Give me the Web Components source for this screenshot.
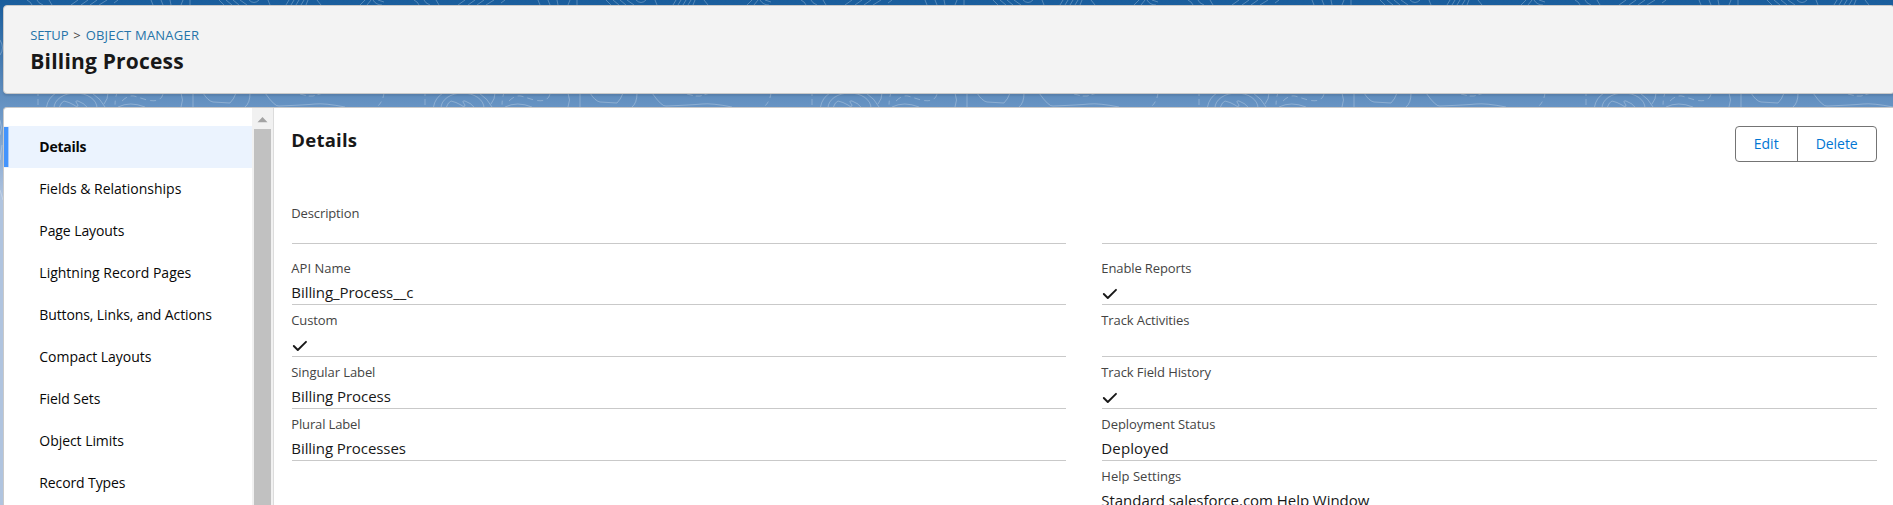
<!DOCTYPE html>
<html lang="en">
<head>
<meta charset="utf-8">
<title>Billing Process</title>
<style>
html,body{margin:0;height:100%;overflow:hidden}
body{font-family:"Open Sans","Noto Sans",sans-serif;color:#181818}
</style>
</head>
<body>
<setup-page>
  <page-header slot="header"></page-header>
  <side-nav slot="nav"></side-nav>
  <details-panel slot="main"></details-panel>
</setup-page>
<script>
const define = (name, html, setup) => {
  const t = document.createElement('template');
  t.innerHTML = html;
  customElements.define(name, class extends HTMLElement {
    connectedCallback() {
      if (this.shadowRoot) return;
      this.attachShadow({mode: 'open'}).append(t.content.cloneNode(true));
      if (setup) setup(this, this.shadowRoot);
    }
  });
};

/* A single line of text tracked to a given width. */
define('fit-text', `<style>:host{display:inline-block;white-space:nowrap;margin-left:-.7px}span{display:inline-block}</style><span><slot></slot></span>`,
  (el, root) => {
    const s = root.querySelector('span'), w = +el.getAttribute('w');
    requestAnimationFrame(() => {
      const n = el.textContent.length;
      s.style.letterSpacing = ((w - s.getBoundingClientRect().width) / n).toFixed(3) + 'px';
    });
  });

define('check-mark', `<style>:host{display:block;width:16px;height:12px}svg{display:block}</style>
<svg width="16" height="12" viewBox="0 0 16 12" fill="none" stroke="#181818" stroke-width="1.9" stroke-linecap="round" stroke-linejoin="round"><path d="M1.8 6 L5.8 10 L14 1.8"/></svg>`);

define('topo-backdrop', `<style>:host{display:block;height:505px;background:linear-gradient(#195d9c 0,#1b5f9e 5px,#608dbe 94px,#6894c4 108px,#b0c4df 200px)}svg{display:block}</style>
<svg width="1893" height="505" fill="none" stroke="#fff" stroke-width="1">
<defs><pattern id="p" width="387" height="210" patternUnits="userSpaceOnUse">
<g stroke-opacity=".26">
<path d="M38 93v3M38 99v6M46.5 107Q48 98 56 93M92 93Q101 99 105 107M108 93Q108 99 104 104"/>
<path d="M54 108a21.5 15 0 0 1 43 0M59 108q2-6 5-7q5 1 10 4q4 3 4 0q-4-5 0-4q6 2 10 7"/>
<path d="M117 93q-2 5-2 14" stroke-dasharray="4 4"/><path d="M122 101Q128 95 134 96L147 100Q161 103 163 94" stroke-dasharray="6 4"/>
<path d="M118 107Q130 101 145 107M181 93Q184 100 181 107M193 93V107M203 93Q208 101 213 102L230 103Q234 99 236 93M250 93Q250 103 245 107M265 93Q275 107 279 106Q305 105 315 104T345 107"/>
<path d="M300 94L308 96L313 96L323 93" stroke-dasharray="6 3"/><path d="M384 93q-1 8-6 13" stroke-dasharray="5 4"/>
<path d="M27 0Q31 2 32 5M37 0Q38 3 43 5M49 0L52 5M71 5L78 0M81 5L88 0M90 5L97 0M99 5L107 0M114 3L118 0M151 0L153 5M161 0L163 5M170 0L171 5M181 5L183 0M190 0V5M219 0L224 5M226 0L232 5M233 0L239 5M240 0L247 5M249 0Q254 5 259 0M268 0L270 5M286 5L289 0M291 5L294 0M296 5L299 0M301 5L304 0M306 5L308 0M317 0L321 5M360 5L365 0M367 5L371 0M373 0Q376 5 382 5M378 0L384 2"/>
<path d="M0 40Q5 48 0 55M0 120Q3 128 0 135M2 145L0 160M0 190L3 200" /></g>
</pattern></defs><rect width="1893" height="210" fill="url(#p)" stroke="none"/></svg>`);

define('setup-page', `<style>
:host{display:grid;width:1893px;height:505px;overflow:hidden}
topo-backdrop,.page{grid-area:1/1;min-height:0;min-width:0}
.page{z-index:1;box-sizing:border-box;height:505px;padding:5px 0 0 3px;display:flex;flex-direction:column;gap:13px}
.card{flex:1;min-height:0;display:flex;overflow:hidden;background:#fff;border:1px solid #c9c9c9;border-width:1px 0 0 1px;border-radius:4px 0 0 0}
</style><topo-backdrop></topo-backdrop><div class="page"><slot name="header"></slot><div class="card"><slot name="nav"></slot><slot name="main"></slot></div></div>`);

define('page-header', `<style>
:host{display:block;box-sizing:border-box;flex:none;height:89px;margin-right:-2px;padding:19px 27px 0;background:#f3f3f3;border:1px solid #c9c9c9;border-radius:4px;box-shadow:0 2px 2px rgba(0,0,0,.1)}
nav{display:flex;height:21px;line-height:21px;font-size:13px;color:#2574a9}
.s{margin:0 5px;color:#444}
h1{margin:0;font-size:21px;line-height:30px;font-weight:700}
</style><nav><fit-text w="38">SETUP</fit-text><fit-text class="s" w="8">&gt;</fit-text><fit-text w="113.5">OBJECT MANAGER</fit-text></nav>
<h1><fit-text w="153.5">Billing Process</fit-text></h1>`);

define('nav-item', `<style>
:host{display:flex;box-sizing:border-box;height:42px;padding-left:36px;align-items:center;font-size:14px;line-height:42px;color:#080808}
:host([selected]){background:linear-gradient(#4394fd,#4394fd) 0 1px/4px 40px no-repeat,linear-gradient(#a9cdfb,#a9cdfb) 4px 1px/1px 40px no-repeat,#ebf3fe;font-weight:700}
</style><slot></slot>`);

define('side-nav', `<style>
:host{display:flex;flex:none;width:269px;border-right:1px solid #dcdcdc}
.list{width:248px;padding-top:18px}
.bar{width:21px;background:#f1f1f1;display:flex;flex-direction:column;align-items:center}
svg{display:block;flex:none}
.thumb{width:17px;flex:1;background:#c1c1c1}
</style><div class="list"></div><div class="bar"><svg width="21" height="21"><path d="M5.5 14.2L10.5 9L15.5 14.2Z" fill="#a3a3a3"/></svg><div class="thumb"></div></div>`,
  (el, root) => {
    const items = [['Details',47],['Fields &amp; Relationships',142],['Page Layouts',85],['Lightning Record Pages',152],['Buttons, Links, and Actions',172.5],['Compact Layouts',112],['Field Sets',61],['Object Limits',84.5],['Record Types',86]];
    root.querySelector('.list').innerHTML = items.map(([t, w], i) => `<nav-item${i ? '' : ' selected'}><fit-text w="${w}">${t}</fit-text></nav-item>`).join('');
  });

define('button-group', `<style>
:host{display:flex;box-sizing:border-box;height:36px;width:142px;border:1px solid #747474;border-radius:4px;overflow:hidden}
button{all:unset;box-sizing:border-box;flex:1;text-align:center;font-size:14px;line-height:32px;color:#0176d3}
button:first-of-type{flex:0 0 62px;border-right:1px solid #747474}
</style><button><fit-text w="25">Edit</fit-text></button><button><fit-text w="42">Delete</fit-text></button>`);

define('detail-field', `<style>
:host{display:block;box-sizing:border-box;height:52px;padding-top:5px;border-bottom:1px solid #c9c9c9}
:host([first]){height:51px;padding-top:10px}
:host([second]){height:61px;padding-top:14px}
:host([last]){border:0}
.label{height:20px;line-height:20px;font-size:13px;color:#444}
.value{height:24px;line-height:24px;padding-top:2px;font-size:15px;color:#181818}
.value check-mark{padding-top:8px}
</style><div class="label"></div><div class="value"></div>`,
  (el, root) => {
    const a = n => el.getAttribute(n);
    if (a('label')) root.querySelector('.label').innerHTML = `<fit-text w="${a('lw')}">${a('label')}</fit-text>`;
    root.querySelector('.value').innerHTML = el.hasAttribute('checked') ? '<check-mark></check-mark>' : a('value') ? `<fit-text w="${a('vw')}">${a('value')}</fit-text>` : '';
  });

define('details-panel', `<style>
:host{display:block;flex:1;min-width:0;padding:18px 16px 0 18px}
header{display:flex;justify-content:space-between;height:67px}
h2{margin:0;font-size:18.5px;line-height:28px;font-weight:700}
.cols{display:grid;grid-template-columns:774px 775px;column-gap:36px}
</style><header><h2><fit-text w="66">Details</fit-text></h2><button-group></button-group></header>
<div class="cols"><div>
<detail-field first label="Description" lw="68"></detail-field>
<detail-field second label="API Name" lw="59.5" value="Billing_Process__c" vw="122"></detail-field>
<detail-field label="Custom" lw="46" checked></detail-field>
<detail-field label="Singular Label" lw="84" value="Billing Process" vw="99.5"></detail-field>
<detail-field label="Plural Label" lw="69" value="Billing Processes" vw="114.5"></detail-field>
</div><div>
<detail-field first></detail-field>
<detail-field second label="Enable Reports" lw="90" checked></detail-field>
<detail-field label="Track Activities" lw="88"></detail-field>
<detail-field label="Track Field History" lw="109.5" checked></detail-field>
<detail-field label="Deployment Status" lw="114" value="Deployed" vw="67.5"></detail-field>
<detail-field last label="Help Settings" lw="80" value="Standard salesforce.com Help Window" vw="268"></detail-field>
</div></div>`);
</script>
</body>
</html>
